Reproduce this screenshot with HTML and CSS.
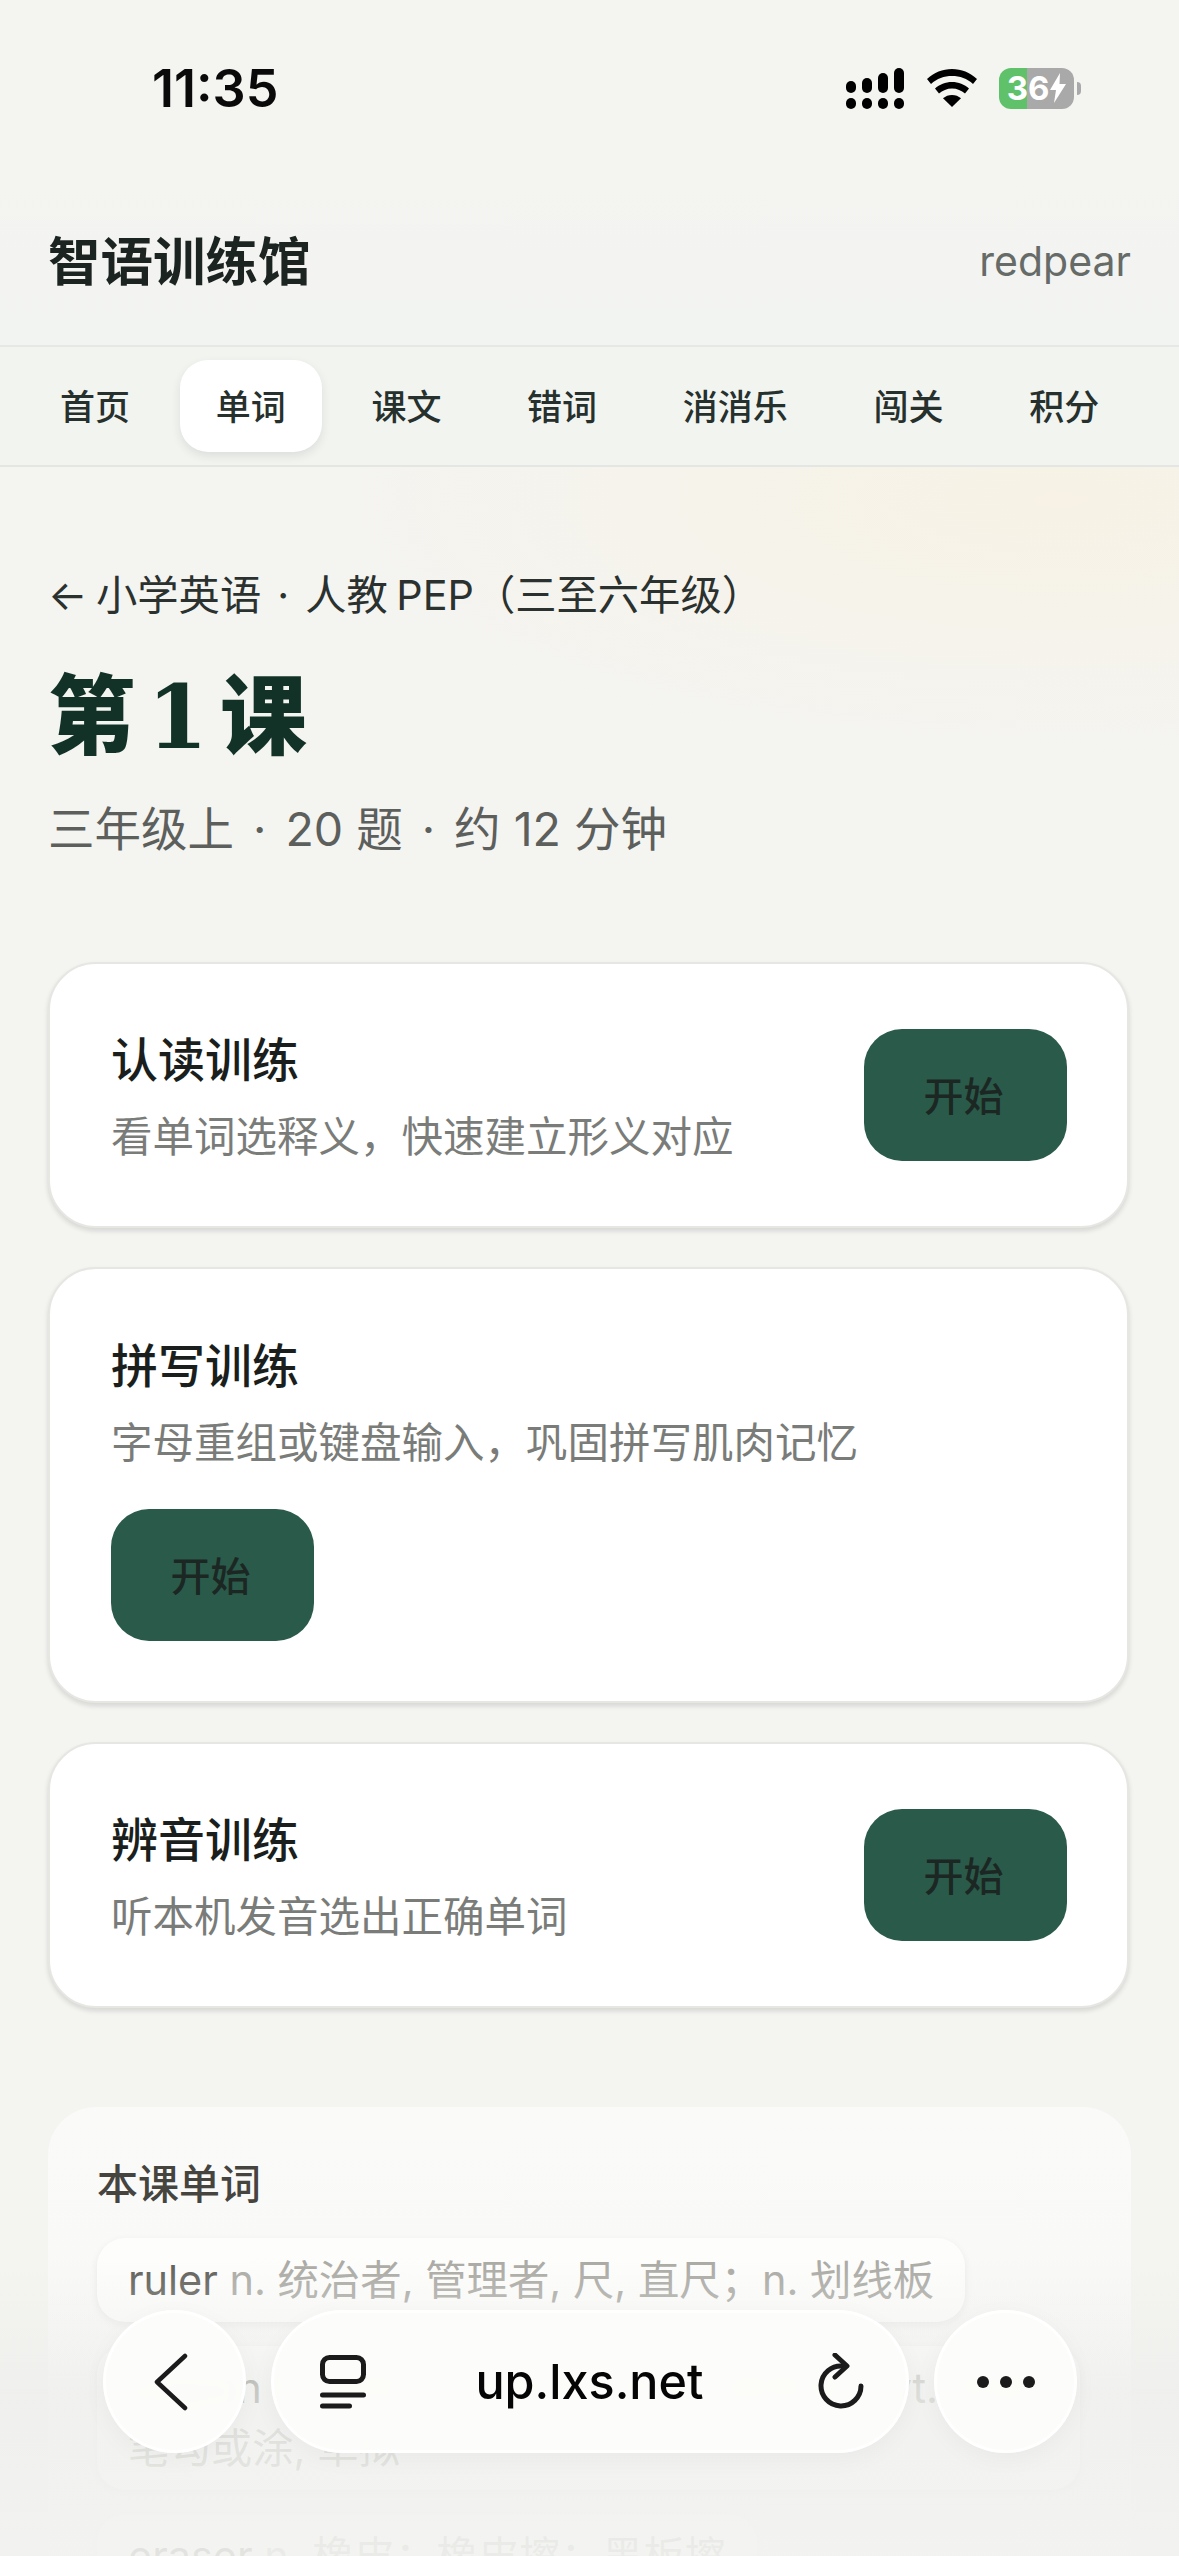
FILE: index.html
```html
<!DOCTYPE html>
<html lang="zh-CN">
<head>
    <meta charset="UTF-8">
    <meta name="viewport" content="width=device-width, initial-scale=1.0">
    <title>智语训练馆</title>
    <link rel="stylesheet" href="styles.css">
</head>
<body>
    <!-- Status Bar -->
    <div class="status-bar">
        <span class="time">11:35</span>
        <div class="status-icons">
            <svg class="signal" width="58" height="41" viewBox="0 0 58 41">
                <rect x="0" y="13" width="10" height="12" rx="5"/>
                <rect x="16" y="10" width="10" height="15" rx="5"/>
                <rect x="32" y="5" width="10" height="20" rx="5"/>
                <rect x="48" y="0" width="10" height="25" rx="5"/>
                <rect x="0" y="30" width="10" height="11" rx="5"/>
                <rect x="16" y="30" width="10" height="11" rx="5"/>
                <rect x="32" y="30" width="10" height="11" rx="5"/>
                <rect x="48" y="30" width="10" height="11" rx="5"/>
            </svg>
            <svg class="wifi" width="50" height="38" viewBox="0 0 50 38">
                <path d="M25 0C15.500 0 7 3.600 0 10l4 5C10 9.600 17 7 25 7s15 2.600 21 8l4-5C43 3.600 34.500 0 25 0z"/>
                <path d="M25 13c-6.500 0-12.500 2.400-17 6.500l4 5c3.500-3 8-5 13-5s9.500 2 13 5l4-5C37.500 15.400 31.500 13 25 13z"/>
                <path d="M25 26c-3.500 0-6.500 1.200-9 3.300L25 38l9-8.700C31.500 27.200 28.500 26 25 26z"/>
            </svg>
            <div class="battery">
                <span class="battery-level">36</span>
                <svg class="bolt" width="16" height="30" viewBox="0 0 16 30"><path d="M10 0 0 17h6l-2 13L16 11H9.500z"/></svg>
            </div>
            <span class="battery-nub"></span>
        </div>
    </div>

    <!-- Header -->
    <header class="site-header">
        <span class="brand">智语训练馆</span>
        <span class="user">redpear</span>
    </header>

    <!-- Nav Tabs -->
    <nav class="tabs">
        <a class="tab">首页</a>
        <a class="tab active">单词</a>
        <a class="tab">课文</a>
        <a class="tab">错词</a>
        <a class="tab">消消乐</a>
        <a class="tab">闯关</a>
        <a class="tab">积分</a>
    </nav>

    <main class="content">
        <a class="back-link">← 小学英语<span class="sep">·</span>人教 PEP（三至六年级）</a>
        <h1 class="lesson-title">第 1 课</h1>
        <p class="lesson-meta">三年级上<span class="sep">·</span>20 题<span class="sep">·</span>约 12 分钟</p>

        <!-- Training Modes -->
        <div class="modes">
            <section class="mode-card">
                <div class="mode-text">
                    <h2>认读训练</h2>
                    <p>看单词选释义，快速建立形义对应</p>
                </div>
                <button class="start-btn">开始</button>
            </section>
            <section class="mode-card stacked">
                <div class="mode-text">
                    <h2>拼写训练</h2>
                    <p>字母重组或键盘输入，巩固拼写肌肉记忆</p>
                </div>
                <button class="start-btn">开始</button>
            </section>
            <section class="mode-card">
                <div class="mode-text">
                    <h2>辨音训练</h2>
                    <p>听本机发音选出正确单词</p>
                </div>
                <button class="start-btn">开始</button>
            </section>
        </div>

        <!-- Word List -->
        <section class="word-panel">
            <h3>本课单词</h3>
            <div class="word-list">
                <div class="word-chip"><span class="word">ruler</span> n. 统治者, 管理者, 尺, 直尺；n. 划线板</div>
                <div class="word-chip"><span class="word">crayon</span> n. 蜡笔, 彩色粉笔, 粉笔, 蜡笔画；vt. 用蜡笔勾或涂, 草拟</div>
                <div class="word-chip"><span class="word">eraser</span> n. 橡皮；橡皮擦；黑板擦</div>
            </div>
        </section>
    </main>

    <!-- Browser Bar -->
    <div class="bottom-fade"></div>
    <div class="browser-bar">
        <div class="round-btn">
            <svg width="36" height="60" viewBox="0 0 36 60" class="line-icon back-icon"><path d="M33 4 5 30l28 26" stroke-width="4.500"/></svg>
        </div>
        <div class="url-pill">
            <svg width="46" height="54" viewBox="0 0 46 54" class="line-icon">
                <rect x="2.500" y="2.500" width="41" height="24" rx="7" stroke-width="5"/>
                <path d="M2.500 40h41M2.500 51h27" stroke-width="5"/>
            </svg>
            <span class="url">up.lxs.net</span>
            <svg width="48" height="58" viewBox="0 0 48 58" class="line-icon">
                <path d="M43 33a20 20 0 1 1-18-20" stroke-width="5"/>
                <path d="M17 2l12 11-12 11" stroke-width="5"/>
            </svg>
        </div>
        <div class="round-btn">
            <svg width="58" height="12" viewBox="0 0 58 12" class="dots">
                <circle cx="6" cy="6" r="6"/><circle cx="29" cy="6" r="6"/><circle cx="52" cy="6" r="6"/>
            </svg>
        </div>
    </div>
</body>
</html>
```

FILE: styles.css
```css
* {
    box-sizing: border-box;
}
html, body {
    margin: 0;
    height: 2556px;
    overflow: hidden;
}
body {
    position: relative;
    width: 1179px;
    font-family: Inter, "Noto Sans CJK SC", sans-serif;
    color: #1e2523;
    background-color: #f4f4f1;
    background-image: radial-gradient(ellipse 760px 260px at 1060px 500px, #f7f2e5 0%, rgba(247, 242, 229, 0) 100%);
}
h1, h2, h3, p {
    margin: 0;
}

/* Status bar */
.status-bar {
    display: flex;
    align-items: center;
    justify-content: space-between;
    height: 176px;
    padding: 0 98px 0 152px;
}
.time {
    font-size: 52px;
    font-weight: 600;
    color: #0a0a0a;
}
.status-icons {
    display: flex;
    align-items: center;
    height: 41px;
}
.signal { margin-right: 23px; }
.wifi { margin-right: 22px; }
.signal, .wifi { fill: #000; }
.battery {
    display: flex;
    align-items: center;
    justify-content: center;
    gap: 1px;
    width: 75px;
    height: 41px;
    border-radius: 12px;
    background: linear-gradient(to right, #5fc26b 0, #5fc26b 28px, #a9a9a9 28px, #a9a9a9 100%);
}
.battery-level {
    font-size: 33px;
    font-weight: 700;
    color: #fff;
    line-height: 41px;
}
.bolt { fill: #fff; }
.battery-nub {
    width: 4px;
    height: 13px;
    margin-left: 3px;
    border-radius: 0 4px 4px 0;
    background-color: #a9a9a9;
}

/* Header */
.site-header {
    display: flex;
    align-items: center;
    justify-content: space-between;
    height: 171px;
    padding: 0 48px 0 48px;
    border-bottom: 2px solid #e5e8e4;
    background: linear-gradient(to bottom, #f4f4f1 0, #f2f4f1 100%);
}
.brand {
    margin-bottom: 6px;
    font-size: 52.500px;
    font-weight: 700;
    color: #1c2422;
}
.user {
    font-size: 41px;
    color: #666b68;
}

/* Tabs */
.tabs {
    display: flex;
    gap: 13.700px;
    height: 120px;
    padding: 13px 0 0 24px;
    border-bottom: 2px solid #e3e6e2;
    background-color: #f2f4f0;
}
.tab {
    height: 92px;
    padding: 0 36px;
    border-radius: 28px;
    font-size: 35px;
    font-weight: 500;
    line-height: 94px;
    color: #26302d;
}
.tab.active {
    background-color: #fff;
    box-shadow: 0 4px 10px rgba(30, 40, 35, 0.1);
}

/* Lesson heading */
.content {
    padding: 100px 50px 0 48px;
}
.back-link {
    display: block;
    font-size: 41.300px;
    line-height: 56px;
    word-spacing: -3px;
    color: #2a312e;
}
.sep {
    margin: 0 16px;
}
.lesson-title {
    margin-top: 40px;
    font-family: "DejaVu Serif", "Noto Sans CJK SC", serif;
    font-size: 87px;
    font-weight: 900;
    line-height: 110px;
    word-spacing: -18px;
    color: #123227;
}
.lesson-meta {
    margin-top: 24px;
    font-size: 46.500px;
    line-height: 64px;
    color: #5c5f5c;
}
.lesson-meta .sep {
    margin: 0 19px;
}

/* Mode cards */
.modes {
    display: flex;
    flex-direction: column;
    gap: 39px;
    margin-top: 101px;
}
.mode-card {
    display: flex;
    align-items: center;
    justify-content: space-between;
    height: 266px;
    padding: 0 60px 0 61px;
    border: 2px solid #e6e6e2;
    border-radius: 48px;
    background-color: #fff;
    box-shadow: 0 3px 5px rgba(30, 40, 35, 0.14);
}
.mode-card.stacked {
    flex-direction: column;
    align-items: flex-start;
    justify-content: flex-start;
    height: 436px;
    padding-top: 62px;
}
.mode-card.stacked .start-btn {
    margin-top: 37px;
}
.mode-text {
    padding-top: 2px;
}
.mode-text h2 {
    font-size: 47px;
    font-weight: 500;
    line-height: 66px;
    color: #1a1f1d;
}
.mode-text p {
    margin-top: 15px;
    font-size: 41.500px;
    line-height: 58px;
    color: #7a7c79;
}
.start-btn {
    flex: none;
    width: 203px;
    height: 132px;
    padding: 0 4px 2px 0;
    border: none;
    border-radius: 38px;
    background-color: #2a5b4a;
    font-family: inherit;
    font-size: 40px;
    font-weight: 500;
    color: #1c2724;
}

/* Word panel */
.word-panel {
    margin: 99px -2px 0 0;
    padding: 50px 49px 0;
    height: 500px;
    border-radius: 48px 48px 0 0;
    background: linear-gradient(to bottom, #fafaf9 0, #f7f7f5 100%);
}
.word-panel h3 {
    font-size: 41px;
    font-weight: 500;
    line-height: 54px;
    color: #45443f;
}
.word-list {
    display: flex;
    flex-direction: column;
    align-items: flex-start;
    gap: 24px;
    margin-top: 27px;
}
.word-chip {
    max-width: 983px;
    padding: 12px 31px;
    border-radius: 28px;
    background-color: #fdfdfc;
    box-shadow: 0 3px 8px rgba(30, 40, 35, 0.07);
    font-size: 41.400px;
    line-height: 60px;
    color: #a9a8a3;
}
.word {
    color: #5b5a55;
}

/* Browser bar */
.bottom-fade {
    position: absolute;
    left: 0;
    right: 0;
    bottom: 0;
    height: 300px;
    background: linear-gradient(to bottom, rgba(240, 241, 238, 0) 0, rgba(238, 239, 236, 0.75) 45%, rgba(242, 243, 240, 0.9) 100%);
}
.browser-bar {
    position: absolute;
    left: 103px;
    top: 2310px;
    display: flex;
    gap: 25px;
    width: 974px;
    height: 143px;
}
.round-btn, .url-pill {
    display: flex;
    align-items: center;
    border: 3px solid rgba(255, 255, 255, 0.9);
    background-color: rgba(252, 252, 250, 0.96);
    backdrop-filter: blur(12px);
    box-shadow: 0 6px 24px rgba(30, 30, 30, 0.04);
}
.round-btn {
    justify-content: center;
    flex: none;
    width: 143px;
    border-radius: 50%;
}
.back-icon {
    margin-right: 10px;
}
.url-pill {
    flex: 1;
    justify-content: space-between;
    padding: 0 40px 0 46px;
    border-radius: 72px;
}
.url {
    margin-right: 5px;
    font-size: 48.500px;
    font-weight: 500;
    color: #050505;
}
.line-icon {
    fill: none;
    stroke: #1b1b1b;
    stroke-linecap: round;
    stroke-linejoin: round;
}
.dots { fill: #1b1b1b; }
```
